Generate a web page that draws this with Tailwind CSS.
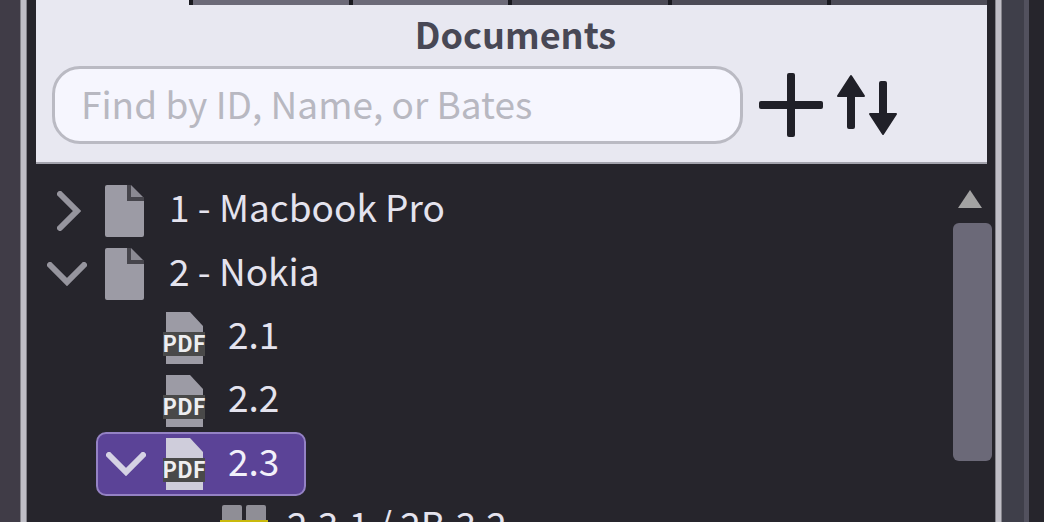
<!DOCTYPE html>
<html lang="en">
<head>
<meta charset="utf-8">
<meta name="viewport" content="width=device-width, initial-scale=1">
<title>Documents</title>
<script src="https://cdn.jsdelivr.net/npm/@tailwindcss/browser@4"></script>
</head>
<body class="flex h-screen flex-col overflow-hidden bg-[#26252c] font-['Noto_Sans_CJK_SC','Noto_Sans',sans-serif] text-[#e4e3ee]">
<svg class="hidden" aria-hidden="true">
  <symbol id="file" viewBox="0 0 40 52">
    <path fill="#9c9ba5" d="M2 0H22V16H39V50Q39 52 37 52H2Q0 52 0 50V2Q0 0 2 0Z"/>
    <path fill="#8b8a93" d="M26 0 38 12H26Z"/>
    <path fill="#46454c" d="M22 0H26V12H39V16H22Z"/>
  </symbol>
  <symbol id="pdf" viewBox="0 0 44 52">
    <path fill="currentColor" d="M4 0H28L41 14V52H4Z"/>
    <path fill="#494949" d="M1 20H43V44H1Z"/>
    <text x="22" y="40" text-anchor="middle" fill="#eeeef0" font-family="Noto Sans CJK SC, sans-serif" font-weight="700" font-size="22">PDF</text>
  </symbol>
  <symbol id="down" viewBox="0 0 40 24">
    <path d="M3 3 20 20 37 3" fill="none" stroke="currentColor" stroke-width="6" stroke-linecap="round"/>
  </symbol>
</svg>
<div class="flex min-h-0 flex-1">
  <div class="w-5 shrink-0 bg-[#403c47]"></div>
  <div class="w-[7px] shrink-0 border-x border-[#85848b] bg-[#bfbec6]"></div>
  <main class="flex min-w-0 flex-1 flex-col">
    <header class="ml-[9px] mr-2 shrink-0 border-b-2 border-[#a3a3ad] bg-[#e8e8f1]">
      <div class="ml-[153px] grid h-[5px] grid-cols-5 gap-1 bg-[#19191f] pl-1">
        <div class="bg-[#6c6a78]"></div>
        <div class="bg-[#6c6a78]"></div>
        <div class="bg-[#4c4b56]"></div>
        <div class="bg-[#4c4b56]"></div>
        <div class="bg-[#4c4b56]"></div>
      </div>
      <h1 class="flex h-[61px] items-center justify-center pb-1.5 pl-2 text-[36px] leading-none font-bold text-[#484855]">Documents</h1>
      <div class="flex items-center pr-[88px] pb-[18px] pl-4">
        <input type="search" aria-label="Find documents" placeholder="Find by ID, Name, or Bates" class="h-[78px] min-w-0 flex-1 rounded-[28px] border-3 border-[#babac3] bg-[#f6f6fe] px-[26px] pb-1 text-[37px] text-[#484855] placeholder:text-[#b8b8c1]">
        <button type="button" aria-label="Add document" class="ml-4 shrink-0">
          <svg class="h-16 w-16" viewBox="0 0 64 64" fill="#202028"><rect y="28" width="64" height="8" rx="2"/><rect x="28" width="8" height="64" rx="2"/></svg>
        </button>
        <button type="button" aria-label="Sort documents" class="ml-3 shrink-0">
          <svg class="h-16 w-16" viewBox="0 0 64 64" fill="#202028" stroke="#202028" stroke-width="2" stroke-linejoin="round"><path d="M16 3 29 23H19V54Q19 55 18 55H14Q13 55 13 54V23H3ZM48 61 35 41H45V10Q45 9 46 9H50Q51 9 51 10V41H61Z"/></svg>
        </button>
      </div>
    </header>
    <div class="flex min-h-0 flex-1">
      <ul class="min-w-0 flex-1 overflow-hidden pt-[15px] pl-[18px] text-[37px] leading-none" role="tree" aria-label="Documents">
        <li role="treeitem" aria-expanded="false" class="flex h-[63px] items-center">
          <button type="button" aria-label="Expand 1" class="flex w-[60px] justify-start pl-3 text-[#96959e]"><svg class="h-10 w-6" viewBox="0 0 24 40"><path d="M3 3 20 20 3 37" fill="none" stroke="currentColor" stroke-width="6" stroke-linecap="round"/></svg></button>
          <svg class="h-[52px] w-10 shrink-0" aria-hidden="true"><use href="#file"/></svg>
          <span class="pb-2 pl-6">1 - Macbook Pro</span>
        </li>
        <li role="treeitem" aria-expanded="true">
          <div class="flex h-16 items-center">
            <button type="button" aria-label="Collapse 2" class="flex w-[60px] pl-[2px] text-[#96959e]"><svg class="h-6 w-10"><use href="#down"/></svg></button>
            <svg class="h-[52px] w-10 shrink-0" aria-hidden="true"><use href="#file"/></svg>
            <span class="pb-2 pl-6">2 - Nokia</span>
          </div>
          <ul role="group" class="pl-[51px]">
            <li role="treeitem" class="flex h-[63px] items-center pl-[66px]">
              <svg class="h-[52px] w-11 shrink-0 text-[#9c9ba5]" role="img" aria-label="PDF"><use href="#pdf"/></svg>
              <span class="pb-2 pl-[22px]">2.1</span>
            </li>
            <li role="treeitem" class="flex h-[63px] items-center pl-[66px]">
              <svg class="h-[52px] w-11 shrink-0 text-[#9c9ba5]" role="img" aria-label="PDF"><use href="#pdf"/></svg>
              <span class="pb-2 pl-[22px]">2.2</span>
            </li>
            <li role="treeitem" aria-selected="true" aria-expanded="true">
              <div class="flex h-16 w-[210px] items-center rounded-[10px] border-2 border-[#9482c4] bg-[#5b4397] text-[#f2f0fa]">
                <button type="button" aria-label="Collapse 2.3" class="flex w-16 pl-2 text-[#d5d2e4]"><svg class="h-6 w-10"><use href="#down"/></svg></button>
                <svg class="h-[52px] w-11 shrink-0 text-[#cfcddb]" role="img" aria-label="PDF"><use href="#pdf"/></svg>
                <span class="pb-2 pl-[22px]">2.3</span>
              </div>
              <ul role="group" class="pl-[122px]">
                <li role="treeitem" class="flex h-[63px] items-center">
                  <svg class="h-[46px] w-[52px] shrink-0" viewBox="0 0 52 46" aria-hidden="true"><path fill="#8f8e96" d="M6 0H22Q24 0 24 2V15H4V2Q4 0 6 0ZM30 0H46Q48 0 48 2V15H28V2Q28 0 30 0Z"/><path fill="#c9b90c" d="M2 15H50V46H2Z"/></svg>
                  <span class="pb-2 pl-[17px]">2.3.1 / 2B.3.2</span>
                </li>
              </ul>
            </li>
          </ul>
        </li>
      </ul>
      <div class="flex w-[42px] shrink-0 flex-col items-start pt-[26px]">
        <button type="button" aria-label="Scroll up" class="ml-[5px]"><svg class="block h-[18px] w-6" viewBox="0 0 24 18"><path fill="#a3a3a3" d="M12 0 24 18H0Z"/></svg></button>
        <div class="mt-[15px] h-[238px] w-[39px] rounded-md bg-[#6b6978]"></div>
      </div>
    </div>
  </main>
  <div class="w-[7px] shrink-0 border-x border-[#85848b] bg-[#bfbec6]"></div>
  <div class="w-[27px] shrink-0 border-r-5 border-[#52515e] bg-[#3f3f4a]"></div>
  <div class="w-[15px] shrink-0"></div>
</div>
</body>
</html>
